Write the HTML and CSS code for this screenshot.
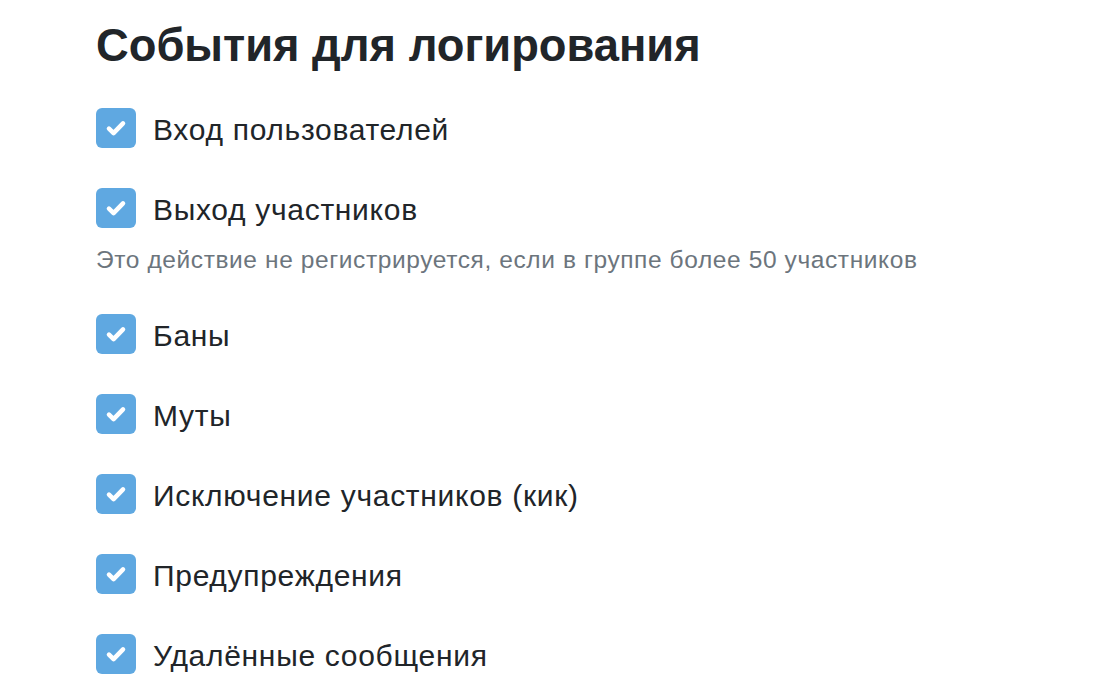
FILE: index.html
```html
<!DOCTYPE html>
<html lang="ru">
<head>
  <meta charset="UTF-8" />
  <title>События для логирования</title>
  <link rel="stylesheet" href="styles.css">
</head>
<body>

  <div class="settings">
    <h1 class="title">События для логирования</h1>

    <label class="option">
      <input type="checkbox" checked>
      <span class="box"><svg viewBox="0 0 16 16"><path d="M4 8.4l2.6 2.5L12 5.4"/></svg></span>
      <span class="label">Вход пользователей</span>
    </label>

    <label class="option">
      <input type="checkbox" checked>
      <span class="box"><svg viewBox="0 0 16 16"><path d="M4 8.4l2.6 2.5L12 5.4"/></svg></span>
      <span class="label">Выход участников</span>
    </label>
    <p class="hint">Это действие не регистрируется, если в группе более 50 участников</p>

    <label class="option">
      <input type="checkbox" checked>
      <span class="box"><svg viewBox="0 0 16 16"><path d="M4 8.4l2.6 2.5L12 5.4"/></svg></span>
      <span class="label">Баны</span>
    </label>

    <label class="option">
      <input type="checkbox" checked>
      <span class="box"><svg viewBox="0 0 16 16"><path d="M4 8.4l2.6 2.5L12 5.4"/></svg></span>
      <span class="label">Муты</span>
    </label>

    <label class="option">
      <input type="checkbox" checked>
      <span class="box"><svg viewBox="0 0 16 16"><path d="M4 8.4l2.6 2.5L12 5.4"/></svg></span>
      <span class="label">Исключение участников (кик)</span>
    </label>

    <label class="option">
      <input type="checkbox" checked>
      <span class="box"><svg viewBox="0 0 16 16"><path d="M4 8.4l2.6 2.5L12 5.4"/></svg></span>
      <span class="label">Предупреждения</span>
    </label>

    <label class="option">
      <input type="checkbox" checked>
      <span class="box"><svg viewBox="0 0 16 16"><path d="M4 8.4l2.6 2.5L12 5.4"/></svg></span>
      <span class="label">Удалённые сообщения</span>
    </label>
  </div>

</body>
</html>
```

FILE: styles.css
```css
html, body {
  margin: 0;
  padding: 0;
  background: #fff;
  color: #212529;
  font-family: "Liberation Sans", Arial, sans-serif;
}

.settings {
  padding: 18px 0 0 96px;
  display: flex;
  flex-direction: column;
}

.title {
  margin: 0 0 34px;
  font-size: 45.3px;
  font-weight: 700;
  line-height: 56px;
}

.option {
  display: flex;
  align-items: center;
  gap: 17px;
  height: 40px;
  margin-bottom: 40px;
  cursor: pointer;
}

.option input {
  display: none;
}

.box {
  width: 40px;
  height: 40px;
  border-radius: 6px;
  background: #5fa8e1;
  display: flex;
  align-items: center;
  justify-content: center;
  flex-shrink: 0;
}

.box svg {
  width: 28px;
  height: 28px;
  fill: none;
  stroke: #fff;
  stroke-width: 2.6;
  stroke-linecap: round;
  stroke-linejoin: round;
}

.label {
  font-size: 30px;
  letter-spacing: 0.7px;
  padding-top: 3px;
}

.hint {
  margin: -23px 0 39px;
  font-size: 24.5px;
  letter-spacing: 0.6px;
  line-height: 30px;
  color: #6c757d;
}
```
